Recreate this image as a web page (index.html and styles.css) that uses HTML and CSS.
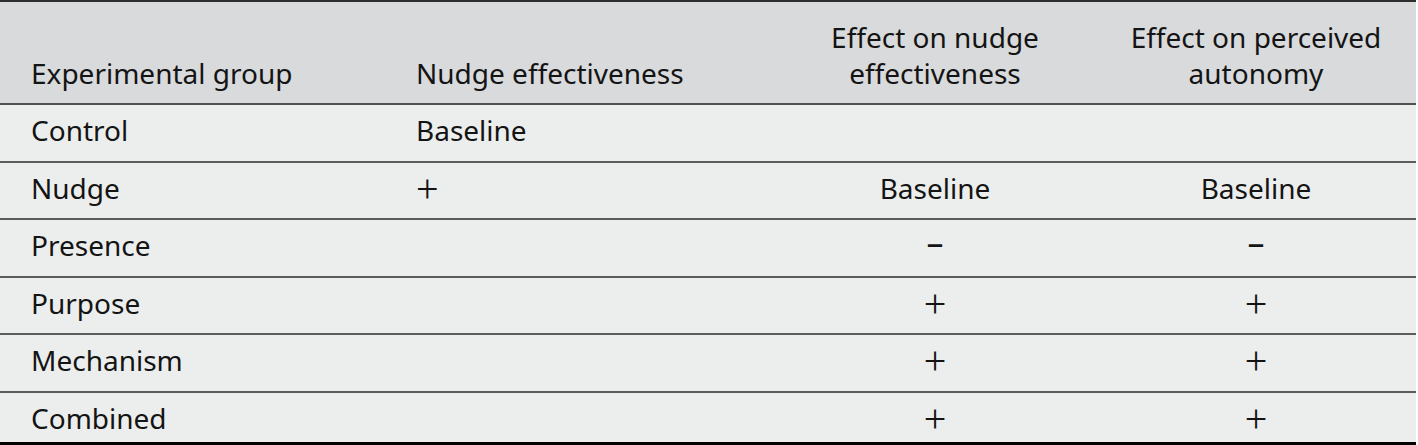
FILE: index.html
```html
<!DOCTYPE html>
<html lang="en">
<head>
<meta charset="utf-8">
<title>Experimental groups</title>
<link rel="stylesheet" href="styles.css">
</head>
<body>
<table class="results">
  <colgroup>
    <col class="c-group">
    <col class="c-eff">
    <col class="c-nudge">
    <col class="c-auto">
  </colgroup>
  <thead>
    <tr>
      <th class="left">Experimental group</th>
      <th class="left">Nudge effectiveness</th>
      <th class="center">Effect on nudge<br>effectiveness</th>
      <th class="center">Effect on perceived<br>autonomy</th>
    </tr>
  </thead>
  <tbody>
    <tr>
      <td>Control</td>
      <td>Baseline</td>
      <td class="center"></td>
      <td class="center"></td>
    </tr>
    <tr>
      <td>Nudge</td>
      <td><span class="plus">+</span></td>
      <td class="center">Baseline</td>
      <td class="center">Baseline</td>
    </tr>
    <tr>
      <td>Presence</td>
      <td></td>
      <td class="center"><span class="minus">–</span></td>
      <td class="center"><span class="minus">–</span></td>
    </tr>
    <tr>
      <td>Purpose</td>
      <td></td>
      <td class="center"><span class="plus">+</span></td>
      <td class="center"><span class="plus">+</span></td>
    </tr>
    <tr>
      <td>Mechanism</td>
      <td></td>
      <td class="center"><span class="plus">+</span></td>
      <td class="center"><span class="plus">+</span></td>
    </tr>
    <tr class="last">
      <td>Combined</td>
      <td></td>
      <td class="center"><span class="plus">+</span></td>
      <td class="center"><span class="plus">+</span></td>
    </tr>
  </tbody>
</table>
</body>
</html>
```

FILE: styles.css
```css
html, body {
  margin: 0;
  padding: 0;
  background: #ffffff;
}

.results {
  width: 1416px;
  border-collapse: collapse;
  table-layout: fixed;
  font-family: "Noto Sans", "Open Sans", sans-serif;
  font-size: 28px;
  line-height: 36px;
  color: #141414;
  border-top: 2px solid #2e2e2e;
  border-bottom: 3px solid #000000;
}

.c-group { width: 385px; }
.c-eff { width: 389px; }
.c-nudge { width: 322px; }
.c-auto { width: 320px; }

.results th {
  font-weight: normal;
  background: #d9dadc;
  padding: 17px 31px 12px 31px;
  vertical-align: bottom;
  border-bottom: 2px solid #505050;
}

.results td {
  background: #eceeed;
  padding: 7px 31px 12.5px 31px;
  vertical-align: top;
  white-space: nowrap;
}

.results tbody tr + tr td {
  border-top: 2px solid #5c5c5c;
}

.results tr.last td {
  padding-bottom: 6.5px;
}

.results .left { text-align: left; }
.results .center {
  text-align: center;
  padding-left: 0;
  padding-right: 0;
}

.plus {
  font-family: "Liberation Serif", "Times New Roman", serif;
  font-size: 40px;
  line-height: 0;
  vertical-align: -3px;
}

.minus {
  font-size: 34px;
  line-height: 0;
  vertical-align: 1px;
}
```
